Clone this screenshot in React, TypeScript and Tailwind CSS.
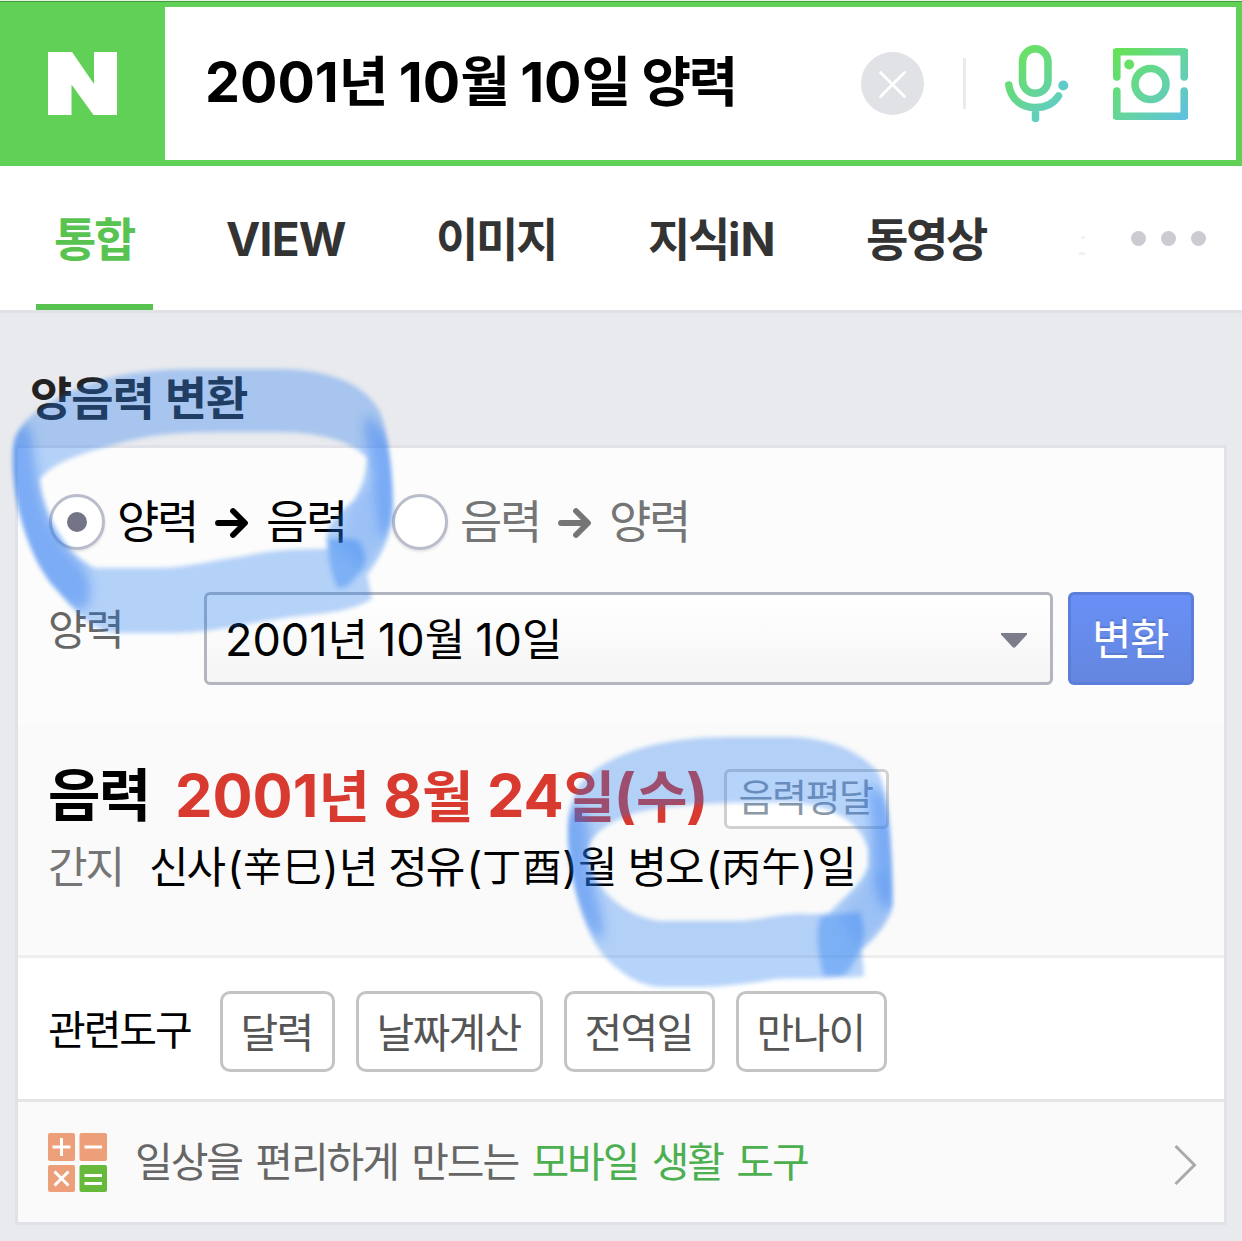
import React from "react";

const FONT = "font-['Inter','Noto_Sans_CJK_KR',sans-serif]";

/* Splits a string into Hangul, Hanja and other runs, since each is tracked differently. */
function Mixed({ text, hangul = "tracking-[-0.05em]" }: { text: string; hangul?: string }) {
  const runs = text.match(/[\uac00-\ud7a3]+|[\u4e00-\u9fff]+|[^\uac00-\ud7a3\u4e00-\u9fff]+/g) ?? [];
  const styleOf = (run: string, next = "") => {
    if (/[\uac00-\ud7a3]/.test(run)) return hangul;
    if (/[\u4e00-\u9fff]/.test(run)) return "relative -top-0.5 text-[39px] tracking-[1px]";
    if (/[\u4e00-\u9fff]/.test(next)) return "ml-[3.5px]";
    return undefined;
  };
  return (
    <>
      {runs.map((run, i) => (
        <span key={i} className={styleOf(run, runs[i + 1])}>
          {run}
        </span>
      ))}
    </>
  );
}

function SearchBar() {
  return (
    <header className="flex h-[166px] border-t border-[#e6f5e4] bg-[#60d156]">
      <div className="flex w-full border-t border-[#459b3e]">
        <div className="flex w-[165px] shrink-0 items-start pt-[50px] pl-12">
          <svg width="69" height="63" viewBox="0 0 69 63" fill="#fff">
            <path d="M0 0H24L46 32V0H69V63H45.500L23.500 32.500V63H0Z" />
          </svg>
        </div>
        <div className="mt-[5px] mr-1.5 mb-1.5 flex flex-1 items-center bg-white">
          <div className="w-[696px] pb-0.5 pl-10 text-[55.500px] leading-[70px] font-bold whitespace-pre text-black">
            <Mixed text="2001년 10월 10일 양력" hangul="text-[54px] tracking-[-0.052em]" />
          </div>
          <div className="flex size-[63px] items-center justify-center rounded-full bg-[#e1e2e6]">
            <svg className="mt-0.5" width="27" height="27" viewBox="0 0 27 27" stroke="#fff" strokeWidth="2.800" strokeLinecap="round">
              <path d="M1.500 1.500L25.500 25.500M25.500 1.500L1.500 25.500" />
            </svg>
          </div>
          <div className="ml-[39px] h-[51px] w-[3px] bg-[#e9ebef]" />
          <svg className="ml-[39px]" width="64" height="78" viewBox="0 0 64 78" fill="none">
            <defs>
              <linearGradient id="mic" x1="8" y1="8" x2="58" y2="66" gradientUnits="userSpaceOnUse">
                <stop offset="0" stopColor="#69e35c" />
                <stop offset=".5" stopColor="#65d78e" />
                <stop offset="1" stopColor="#60cbd2" />
              </linearGradient>
            </defs>
            <g stroke="url(#mic)" strokeWidth="7.500" strokeLinecap="round">
              <rect x="17.500" y="3.800" width="25.500" height="44.500" rx="12.750" />
              <path d="M3.800 40C6 55 17 62.500 30.500 62.500C41 62.500 49 58 53.500 51M30.500 63V73.500" />
            </g>
            <circle cx="58.300" cy="40.500" r="5" fill="#60cbc8" />
          </svg>
          <svg className="ml-11" width="75" height="72" viewBox="0 0 75 72" fill="none">
            <defs>
              <linearGradient id="lens" x1="4" y1="2" x2="72" y2="70" gradientUnits="userSpaceOnUse">
                <stop offset="0" stopColor="#65e158" />
                <stop offset=".5" stopColor="#65d69a" />
                <stop offset="1" stopColor="#5fc1df" />
              </linearGradient>
            </defs>
            <g stroke="url(#lens)" strokeWidth="7.600" strokeLinecap="round" strokeLinejoin="round">
              <path d="M3.800 29V3.800H71.200V29M3.800 43V68.200H71.200V43" />
              <circle cx="37.500" cy="36" r="15.500" />
            </g>
            <path d="M0 1H5V5H0ZM70 1H75V5H70ZM0 67H5V71H0ZM70 67H75V71H70Z" fill="url(#lens)" />
            <circle cx="16.200" cy="16.500" r="5" fill="#67e069" />
          </svg>
        </div>
      </div>
    </header>
  );
}

function Tabs() {
  return (
    <nav className="flex h-[147px] border-b-[3px] border-[#e1e2e6] bg-white pl-9 text-[46px] leading-[56px] font-bold whitespace-pre text-[#333]">
      <div className="h-36 w-[117px] border-b-[6px] border-[#59c351] pt-[45px] pl-[18px] text-[#59c351]">
        <Mixed text="통합" />
      </div>
      <div className="w-[283px] pt-[45px] pl-[73px] tracking-[-0.8px]">VIEW</div>
      <div className="w-[212px] pt-[45px]"><Mixed text="이미지" /></div>
      <div className="w-[218px] pt-[45px]"><Mixed text="지식iN" /></div>
      <div className="w-[213px] pt-[45px]"><Mixed text="동영상" /></div>
      <div className="flex flex-col gap-[13px] pt-[70px]">
        <div className="ml-0.5 h-[3px] w-1 rounded-full bg-[#f3f3f3]" />
        <div className="h-[3px] w-1.5 bg-[#f1f1f1]" />
      </div>
      <div className="ml-[46px] flex gap-[15px] pt-[65px]">
        <div className="size-[15px] rounded-full bg-[#cbccd1]" />
        <div className="size-[15px] rounded-full bg-[#cbccd1]" />
        <div className="size-[15px] rounded-full bg-[#cbccd1]" />
      </div>
    </nav>
  );
}

function Radio({ checked }: { checked?: boolean }) {
  return (
    <div className="-ml-px flex size-14 shrink-0 items-center justify-center rounded-full border-[3px] border-[#b9bccb] bg-white shadow-[0_2px_3px_rgba(0,0,0,0.1)]">
      {checked && <div className="size-5 rounded-full bg-[#737586]" />}
    </div>
  );
}

function Arrow() {
  return (
    <svg className="mt-0.5 shrink-0" width="34" height="32" viewBox="0 0 34 32" fill="none" stroke="currentColor" strokeWidth="5.800" strokeLinecap="round" strokeLinejoin="round">
      <path d="M3 16H29M18 4L30 16L18 28" />
    </svg>
  );
}

function Direction({ from, to, checked }: { from: string; to: string; checked?: boolean }) {
  return (
    <div className={checked ? "flex w-[343px] items-center text-black" : "flex w-[343px] items-center text-[#757575]"}>
      <Radio checked={checked} />
      <div className="mb-[3px] ml-3 w-[98px]"><Mixed text={from} /></div>
      <Arrow />
      <div className="mb-[3px] ml-[17px]"><Mixed text={to} /></div>
    </div>
  );
}

function Converter() {
  return (
    <section className="h-[276px] bg-[#fcfcfc] pt-[45px] pl-8">
      <div className="flex h-[58px] text-[46px] leading-[56px] whitespace-pre">
        <Direction from="양력" to="음력" checked />
        <Direction from="음력" to="양력" />
      </div>
      <div className="-ml-0.5 mt-[41px] flex">
        <div className="w-[156px] pt-2.5 text-[42.500px] leading-[56px] text-[#666]"><Mixed text="양력" hangul="tracking-[-0.04em]" /></div>
        <div className="flex h-[93px] w-[849px] items-center justify-between rounded-[6px] border-[3px] border-[#b3b5bf] bg-linear-to-b from-white to-[#f5f5f5] pr-[23px] pl-[18px]">
          <span className="pt-0.5 text-[45px] leading-[60px] whitespace-pre text-black"><Mixed text="2001년 10월 10일" hangul="text-[44px] tracking-[-0.06em]" /></span>
          <svg className="mt-1" width="26" height="15" viewBox="0 0 26 15" fill="#7b7d8a">
            <path d="M0 0H26V1.500L14 14.500H12L0 1.500Z" />
          </svg>
        </div>
        <button className="ml-[15px] h-[93px] w-[126px] rounded-[6px] border-[3px] border-[#5b7edb] bg-linear-to-b from-[#6990f7] to-[#6486df] pr-0.5 text-[43px] leading-[56px] text-white [text-shadow:0_-2px_0_#587bd2]">
          <Mixed text="변환" hangul="tracking-[-0.035em]" />
        </button>
      </div>
    </section>
  );
}

function Result() {
  return (
    <section className="h-[234px] border-b-[3px] border-[#eee] bg-[#fafafa] pt-[37px] pl-[30px] whitespace-pre">
      <div className="flex h-[72px] items-center">
        <div className="mb-0.5 w-[127px] text-[57px] leading-[70px] font-bold text-black"><Mixed text="음력" hangul="tracking-[-0.03em]" /></div>
        <div className="mb-0.5 w-[549px] text-[59.500px] leading-[70px] font-bold text-[#d93a2f] [word-spacing:1px]"><Mixed text="2001년 8월 24일(수)" hangul="text-[56px] tracking-[-0.03em]" /></div>
        <div className="mt-1 flex h-[60px] w-[165px] items-center justify-center rounded-[6px] border-[3px] border-[#d0d0d0] bg-white pr-0.5 pb-[5px] text-[38px] leading-[50px] text-[#8c98a5]">
          <Mixed text="음력평달" hangul="tracking-[-0.04em]" />
        </div>
      </div>
      <div className="flex pt-1 text-[43px] leading-[60px] text-black">
        <div className="w-[101px] text-[#757575]"><Mixed text="간지" /></div>
        <div><Mixed text="신사(辛巳)년 정유(丁酉)월 병오(丙午)일" /></div>
      </div>
    </section>
  );
}

function Tool({ label, width }: { label: string; width: string }) {
  return (
    <div className={`mt-[5px] flex h-[81px] items-center justify-center rounded-[10px] border-[3px] border-[#c4c4c4] pt-[3px] pr-0.5 text-[#555] ${width}`}>
      <Mixed text={label} hangul="tracking-[-0.043em]" />
    </div>
  );
}

function RelatedTools() {
  return (
    <section className="flex h-36 items-center gap-[21px] border-b-[3px] border-[#e6e6e6] bg-white pl-[30px] text-[41px] leading-[56px] whitespace-pre text-black">
      <div className="mt-0.5 -mr-[21px] w-[172px]"><Mixed text="관련도구" /></div>
      <Tool label="달력" width="w-[115px]" />
      <Tool label="날짜계산" width="w-[187px]" />
      <Tool label="전역일" width="w-[151px]" />
      <Tool label="만나이" width="w-[151px]" />
    </section>
  );
}

function Promo() {
  return (
    <section className="flex h-[120px] items-center bg-[#fafafa] pl-[30px] text-[41px] leading-[56px] whitespace-pre">
      <svg className="mt-px shrink-0" width="59" height="59" viewBox="0 0 59 59" fill="none">
        <rect width="27" height="28" rx="2" fill="#ed9f79" />
        <rect x="31.500" width="27.500" height="28" rx="2" fill="#ed9f79" />
        <rect y="32" width="27" height="27" rx="2" fill="#ed9f79" />
        <rect x="31.500" y="32" width="27.500" height="27" rx="2" fill="#66b93a" />
        <path d="M4.500 14H22.500M13.500 5V23M36.500 14H54M36.500 42.500H54M36.500 50.500H54M6.500 38.500L20.500 52.500M20.500 38.500L6.500 52.500" stroke="#fff" strokeWidth="3" />
      </svg>
      <div className="ml-7 text-[#666] [word-spacing:1.7px]">
        <Mixed text="일상을 편리하게 만드는 " />
        <span className="text-[#4caf50]"><Mixed text="모바일 생활 도구" /></span>
      </div>
      <svg className="mt-[5px] mr-[27px] ml-auto" width="23" height="42" viewBox="0 0 23 42" fill="none" stroke="#aaa" strokeWidth="3">
        <path d="M1.500 2L20.500 21L1.500 40" />
      </svg>
    </section>
  );
}

const RING_TOP =
  "M13 450C14 425 35 409 70 392C110 373 150 369 200 369H280C335 370 366 386 380 412C388 432 393 475 393 505C393 535 380 558 367 575L372 599C350 612 325 613 290 617C245 623 215 632 175 633H120C90 632 75 610 55 588C28 558 10 495 13 450ZM40 479C55 460 90 451 120 443C160 432 185 433 220 432H280C325 432 355 444 367 458C366 475 362 487 354 500C340 513 322 525 327 549C295 549 270 550 245 556C210 561 190 567 160 568H95C70 555 60 536 51 519C44 502 41 490 40 479Z";
const RING_BOTTOM =
  "M568 830C569 798 578 778 606 763C645 742 685 737 740 737H790C835 738 863 755 878 772C890 791 892 855 893 905C889 925 872 940 862 950L864 976C840 979 800 978 775 979C735 986 710 987 690 987H660C635 985 618 970 605 957C585 935 568 880 568 830ZM590 843C598 828 615 820 635 813C680 802 730 803 790 802C835 805 863 825 868 850V866C860 888 842 898 830 912C822 915 810 914 795 914C775 915 755 921 735 921H660C630 918 608 897 600 885C590 871 587 855 590 843Z";

/* Translucent blue marker rings drawn over the page. */
function Highlights() {
  return (
    <svg className="pointer-events-none absolute inset-0" width="1242" height="1241" viewBox="0 0 1242 1241">
      <defs>
        <filter id="edge"><feGaussianBlur stdDeviation="2.200" /></filter>
        <filter id="fade"><feGaussianBlur stdDeviation="5.500" /></filter>
        <filter id="tip"><feGaussianBlur stdDeviation="2.500" /></filter>
        <mask id="rings" maskUnits="userSpaceOnUse" x="0" y="340" width="920" height="680">
          <g fill="#fff" fillRule="evenodd" filter="url(#edge)">
            <path d={RING_TOP} />
            <path d={RING_BOTTOM} />
          </g>
        </mask>
      </defs>
      <g fill="#2276f0">
        <g filter="url(#edge)" fillRule="evenodd" fillOpacity=".32">
          <path d={RING_TOP} />
          <path d={RING_BOTTOM} />
        </g>
        <g mask="url(#rings)" fillOpacity=".4">
          <g filter="url(#fade)">
            <path d="M6 450C8 430 22 418 30 428C34 450 35 472 42 500C51 530 65 548 84 568C96 590 90 604 82 610C60 607 50 590 40 578C15 545 4 490 6 450Z" />
            <path d="M366 415C378 425 388 432 396 450C404 500 396 525 382 540C378 520 374 490 371 468C368 445 362 430 366 415Z" />
            <path d="M560 825C565 800 586 800 589 830C588 855 592 880 598 900C604 925 606 935 600 940C590 932 575 912 566 880C560 860 558 840 560 825Z" />
            <path d="M866 785C884 790 894 800 898 850C902 880 902 900 888 912C878 905 872 880 872 850C872 820 868 800 866 785Z" />
          </g>
          <g filter="url(#tip)" fillOpacity=".36">
            <path d="M328 538C340 540 350 538 358 540C365 550 368 562 362 570C352 580 350 588 338 588C330 572 328 556 328 538Z" />
            <path d="M820 918C832 912 846 914 860 912C864 925 866 940 858 955C852 965 848 975 840 976H824C819 958 815 936 820 918Z" />
          </g>
          <g filter="url(#fade)" fillOpacity=".17">
            <path d="M352 500L376 480L390 535L365 570L335 545Z" />
            <path d="M872 870L890 880L888 920L860 950L840 912Z" />
          </g>
        </g>
      </g>
    </svg>
  );
}

export default function App() {
  return (
    <div className={`relative h-[1241px] w-[1242px] overflow-hidden bg-[#e9eaee] ${FONT}`}>
      <SearchBar />
      <Tabs />
      <main className="px-[15px]">
        <h1 className="h-[132px] pt-[57px] pl-[15px] text-[46px] leading-[56px] font-bold whitespace-pre text-[#222]">
          <Mixed text="양음력 변환" hangul="tracking-[-0.023em]" />
        </h1>
        <div className="border-[3px] border-[#e1e2e8]">
          <Converter />
          <Result />
          <RelatedTools />
          <Promo />
        </div>
      </main>
      <Highlights />
    </div>
  );
}
